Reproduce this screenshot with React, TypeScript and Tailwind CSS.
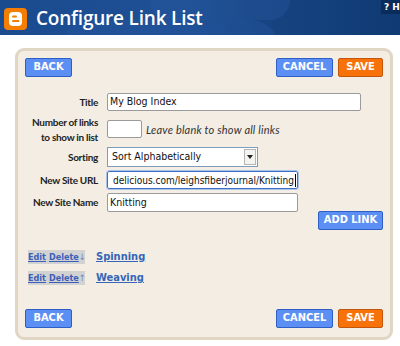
import React from "react";

const btnBlue =
  "h-[19px] px-0 flex items-center justify-center bg-[#5c8ff3] border border-[#2f5fc4] rounded-[2px] text-white font-bold text-[11px] font-['DejaVu_Sans_Condensed','DejaVu_Sans',sans-serif]";
const btnOrange =
  "h-[19px] flex items-center justify-center bg-[#f8720a] border border-[#c2560a] rounded-[2px] text-white font-bold text-[11px] font-['DejaVu_Sans_Condensed','DejaVu_Sans',sans-serif]";

function ButtonRow() {
  return (
    <div className="flex items-center justify-between">
      <div className={`${btnBlue} w-[47px]`}>BACK</div>
      <div className="flex gap-[5px]">
        <div className={`${btnBlue} w-[57px]`}>CANCEL</div>
        <div className={`${btnOrange} w-[45px]`}>SAVE</div>
      </div>
    </div>
  );
}

const label =
  "w-[73px] text-right font-bold text-[10px] leading-[15px] tracking-[-0.3px] text-[#222] font-['Lato','Open_Sans',sans-serif] shrink-0";
const inputText =
  "text-[10.5px] text-[#111] font-['DejaVu_Sans_Condensed','DejaVu_Sans',sans-serif]";

function Logo() {
  return (
    <svg width="23" height="22" viewBox="0 0 23 22">
      <rect x="0" y="0" width="23" height="22" rx="4" fill="#f57d00" />
      <rect x="5" y="4" width="13" height="14" rx="4" fill="#ffffff" />
      <rect x="8" y="7.5" width="5" height="2" rx="1" fill="#f57d00" />
      <rect x="8" y="12" width="7.5" height="2" rx="1" fill="#f57d00" />
    </svg>
  );
}

export default function App() {
  return (
    <div className="w-[400px] h-[346px] bg-white overflow-hidden relative">
      {/* header */}
      <div className="h-[35px] relative overflow-hidden bg-[linear-gradient(90deg,#1b4b8f_0%,#1f4f94_45%,#174482_65%,#0f3a73_100%)] flex items-center pl-[4px]">
        <div className="absolute left-[60px] top-[20px] w-[220px] h-[60px] rounded-full bg-[#2657a0] opacity-40" />
        <div className="absolute left-[150px] top-[-20px] w-[140px] h-[40px] rounded-full bg-[#2a5ca6] opacity-30" />
        <div className="relative mt-[2px]">
          <Logo />
        </div>
        <div className="relative ml-[9px] text-white text-[19px] font-semibold font-['Open_Sans',sans-serif] leading-none tracking-[-0.2px] mt-[1px]">
          Configure Link List
        </div>
        <div className="absolute right-0 top-0 h-[14px] w-[19px] bg-[#0b2c5a] text-white text-[9px] font-bold font-['DejaVu_Sans',sans-serif] leading-[14px] pl-[3px] whitespace-nowrap overflow-hidden">
          ? He
        </div>
      </div>

      {/* panel */}
      <div className="ml-[15px] mt-[13px] w-[378px] h-[292px] border-[3px] border-[#e1d5c3] rounded-[9px] bg-[#f4ede4] px-[7px] pt-[7px]">
        <ButtonRow />

        <div className="mt-[16px] flex items-center">
          <div className={label}>Title</div>
          <div className={`ml-[9px] w-[254px] h-[18px] bg-white border border-[#9a9a9a] rounded-[2px] flex items-center pl-[2px] ${inputText}`}>
            My Blog Index
          </div>
        </div>

        <div className="mt-[4px] flex items-start">
          <div className={label}>
            Number of links
            <br />
            to show in list
          </div>
          <div className="ml-[9px] mt-[5px] flex items-center">
            <div className="w-[35px] h-[18px] bg-white border border-[#9a9a9a] rounded-[2px]" />
            <div className="ml-[4px] mt-[2px] italic text-[11px] tracking-[0.2px] text-[#333] font-['Lato','Open_Sans',sans-serif]">
              Leave blank to show all links
            </div>
          </div>
        </div>

        <div className="mt-[2px] flex items-center">
          <div className={label}>Sorting</div>
          <div className={`ml-[9px] w-[151px] h-[20px] bg-white border border-[#7f9db9] flex items-center justify-between pl-[4px] pr-[1px] ${inputText}`}>
            <span>Sort Alphabetically</span>
            <div className="w-[12px] h-[16px] bg-[#f3f3f0] border border-[#b5b5b5] flex items-center justify-center">
              <svg width="6" height="4" viewBox="0 0 6 4">
                <path d="M0 0H6L3 4Z" fill="#222" />
              </svg>
            </div>
          </div>
        </div>

        <div className="mt-[4px] flex items-center">
          <div className={label}>New Site URL</div>
          <div className="ml-[9px] w-[191px] h-[18px] bg-white border border-[#3d6fc4] rounded-[2px] outline outline-1 outline-[#a9c2ea] flex items-center justify-end overflow-hidden whitespace-nowrap pr-[1px] text-[10px] text-[#111] font-['DejaVu_Sans_Condensed','DejaVu_Sans',sans-serif]">
            <span>delicious.com/leighsfiberjournal/Knitting</span>
            <span className="w-px h-[13px] bg-black ml-px" />
          </div>
        </div>

        <div className="mt-[4px] flex items-center">
          <div className={label}>New Site Name</div>
          <div className={`ml-[9px] w-[191px] h-[19px] bg-white border border-[#9a9a9a] rounded-[2px] flex items-center pl-[2px] ${inputText}`}>
            Knitting
          </div>
        </div>

        <div className="flex justify-end -mt-px">
          <div className={`${btnBlue} w-[65px]`}>ADD LINK</div>
        </div>

        <div className="mt-[20px] flex flex-col gap-[7px] font-['DejaVu_Sans_Condensed','DejaVu_Sans',sans-serif]">
          {[
            { name: "Spinning", arrow: "↓" },
            { name: "Weaving", arrow: "↑" },
          ].map((r) => (
            <div key={r.name} className="flex items-center ml-[3px] h-[14px] leading-[14px]">
              <div className="w-[57px] h-[14px] bg-[#d2d2d2] flex items-center text-[9px] font-bold text-[#3a5fb8] leading-none">
                <span className="underline">Edit</span>
                <span className="underline ml-[3px]">Delete</span>
                <span className="ml-auto mr-[5px] text-[#6a86c8] font-normal">{r.arrow}</span>
              </div>
              <div className="ml-[11px] text-[11px] font-bold text-[#3566b8] underline">{r.name}</div>
            </div>
          ))}
        </div>

        <div className="mt-[24px]">
          <ButtonRow />
        </div>
      </div>
    </div>
  );
}
